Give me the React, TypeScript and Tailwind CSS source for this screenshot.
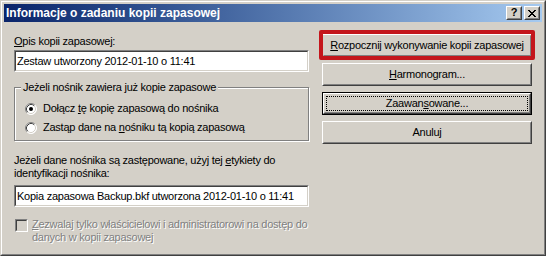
import React from "react";

const font = "font-['Liberation_Sans',Arial,sans-serif]";

// sunken 2px edit frame (classic Windows)
const EditBox = ({ value }: { value: string }) => (
  <div className="h-[22px] border border-t-[#808080] border-l-[#808080] border-b-white border-r-white">
    <div className="h-full border border-t-[#404040] border-l-[#404040] border-b-[#D4D0C8] border-r-[#D4D0C8] bg-white flex items-center pl-[1px] leading-[13px] whitespace-nowrap overflow-hidden">
      {value}
    </div>
  </div>
);

const Radio = ({ checked }: { checked?: boolean }) => (
  <svg width="12" height="12" viewBox="0 0 12 12" className="shrink-0">
    <circle cx="6" cy="6" r="5.5" fill="#fff" />
    <path d="M2.11 9.89A5.5 5.5 0 0 1 9.89 2.11" fill="none" stroke="#808080" />
    <path d="M9.89 2.11A5.5 5.5 0 0 1 2.11 9.89" fill="none" stroke="#fff" />
    <path d="M2.82 9.18A4.5 4.5 0 0 1 9.18 2.82" fill="none" stroke="#404040" />
    <path d="M9.18 2.82A4.5 4.5 0 0 1 2.82 9.18" fill="none" stroke="#D4D0C8" />
    {checked && <circle cx="6" cy="6" r="2" fill="#000" />}
  </svg>
);

const Button = ({
  children,
  isDefault,
}: {
  children: React.ReactNode;
  isDefault?: boolean;
}) =>
  isDefault ? (
    <div className="h-[23px] border border-black">
      <div className="h-full border border-t-white border-l-white border-b-[#404040] border-r-[#404040]">
        <div className="h-full border border-t-[#D4D0C8] border-l-[#D4D0C8] border-b-[#808080] border-r-[#808080] p-[1px]">
          <div className="h-full border border-dotted border-black flex items-center justify-center">
            {children}
          </div>
        </div>
      </div>
    </div>
  ) : (
    <div className="h-[23px] border border-t-white border-l-white border-b-[#404040] border-r-[#404040]">
      <div className="h-full border border-t-[#D4D0C8] border-l-[#D4D0C8] border-b-[#808080] border-r-[#808080] flex items-center justify-center whitespace-nowrap">
        {children}
      </div>
    </div>
  );

const CaptionButton = ({ children }: { children: React.ReactNode }) => (
  <div className="w-[16px] h-[14px] border border-t-white border-l-white border-b-[#404040] border-r-[#404040] bg-[#D4D0C8]">
    <div className="h-full border border-t-[#D4D0C8] border-l-[#D4D0C8] border-b-[#808080] border-r-[#808080] flex items-center justify-center">
      {children}
    </div>
  </div>
);

export default function App() {
  return (
    <div
      className={`${font} w-[546px] h-[256px] text-[11px] leading-[13px] text-black border border-t-[#D4D0C8] border-l-[#D4D0C8] border-b-[#404040] border-r-[#404040] bg-[#D4D0C8]`}
    >
      <div className="h-full border border-t-white border-l-white border-b-[#808080] border-r-[#808080] p-[2px] flex flex-col">
        {/* Title bar */}
        <div className="h-[18px] shrink-0 bg-linear-to-r from-[#0A246A] to-[#A6CAF0] flex items-center justify-between pl-[2px] pr-[2px]">
          <span className="text-white font-bold text-[12px] leading-[14px] whitespace-nowrap">
            Informacje o zadaniu kopii zapasowej
          </span>
          <div className="flex">
            <CaptionButton>
              <span className="font-bold text-[11px] leading-[11px] -mt-[1px]">?</span>
            </CaptionButton>
            <div className="w-[2px]" />
            <CaptionButton>
              <svg width="8" height="7" viewBox="0 0 8 7">
                <path
                  d="M0 0h2v1H0zM6 0h2v1H6zM1 1h2v1H1zM5 1h2v1H5zM2 2h4v1H2zM3 3h2v1H3zM2 4h4v1H2zM1 5h2v1H1zM5 5h2v1H5zM0 6h2v1H0zM6 6h2v1H6z"
                  fill="#000"
                />
              </svg>
            </CaptionButton>
          </div>
        </div>

        {/* Body */}
        <div className="flex flex-1 px-[10px] gap-[13px] tracking-[-0.25px]">
          {/* Left column */}
          <div className="w-[295px] flex flex-col pt-[13px]">
            <div>
              <span className="underline">O</span>pis kopii zapasowej:
            </div>
            <div className="mt-[2px]">
              <EditBox value="Zestaw utworzony 2012-01-10 o 11:41" />
            </div>

            {/* Group box */}
            <div className="relative mt-[15px] h-[54px] border border-[#808080] shadow-[inset_1px_1px_0_#fff,1px_1px_0_#fff] flex flex-col pt-[14px] pl-[10px] gap-[6px]">
              <span className="absolute -top-[7px] left-[6px] px-[2px] bg-[#D4D0C8] whitespace-nowrap">
                Jeżeli nośnik zawiera już kopie zapasowe
              </span>
              <div className="flex items-center gap-[6px] h-[13px]">
                <Radio checked />
                <span>
                  Dołącz <span className="underline">t</span>ę kopię zapasową do nośnika
                </span>
              </div>
              <div className="flex items-center gap-[6px] h-[13px]">
                <Radio />
                <span>
                  Zastąp dane na <span className="underline">n</span>ośniku tą kopią zapasową
                </span>
              </div>
            </div>

            <div className="mt-[13px] whitespace-nowrap">
              Jeżeli dane nośnika są zastępowane, użyj tej{" "}
              <span className="underline">e</span>tykiety do
              <br />
              identyfikacji nośnika:
            </div>
            <div className="mt-[5px]">
              <EditBox value="Kopia zapasowa Backup.bkf utworzona 2012-01-10 o 11:41" />
            </div>

            <div className="flex mt-[11px] ml-[1px] gap-[4px]">
              <div className="w-[13px] h-[13px] shrink-0 mt-[1px] border border-t-[#808080] border-l-[#808080] border-b-white border-r-white">
                <div className="h-full border border-t-[#404040] border-l-[#404040] border-b-[#D4D0C8] border-r-[#D4D0C8] bg-[#D4D0C8]" />
              </div>
              <div className="text-[#808080] whitespace-nowrap [text-shadow:1px_1px_0_#fff]">
                <span className="underline">Z</span>ezwalaj tylko właścicielowi i administratorowi na dostęp do
                <br />
                danych w kopii zapasowej
              </div>
            </div>
          </div>

          {/* Right column */}
          <div className="w-[210px] flex flex-col pt-[12px] gap-[6px]">
            <div className="relative">
              <Button>
                <span>
                  <span className="underline">R</span>ozpocznij wykonywanie kopii zapasowej
                </span>
              </Button>
              <span className="absolute -top-[4px] -bottom-[3px] -left-[3px] -right-[3px] border-4 border-[#C4161C] rounded-[2px]" />
            </div>
            <Button>
              <span>
                <span className="underline">H</span>armonogram...
              </span>
            </Button>
            <Button isDefault>
              <span>
                Zaawan<span className="underline">s</span>owane...
              </span>
            </Button>
            <Button>
              <span>Anuluj</span>
            </Button>
          </div>
        </div>
      </div>
    </div>
  );
}
